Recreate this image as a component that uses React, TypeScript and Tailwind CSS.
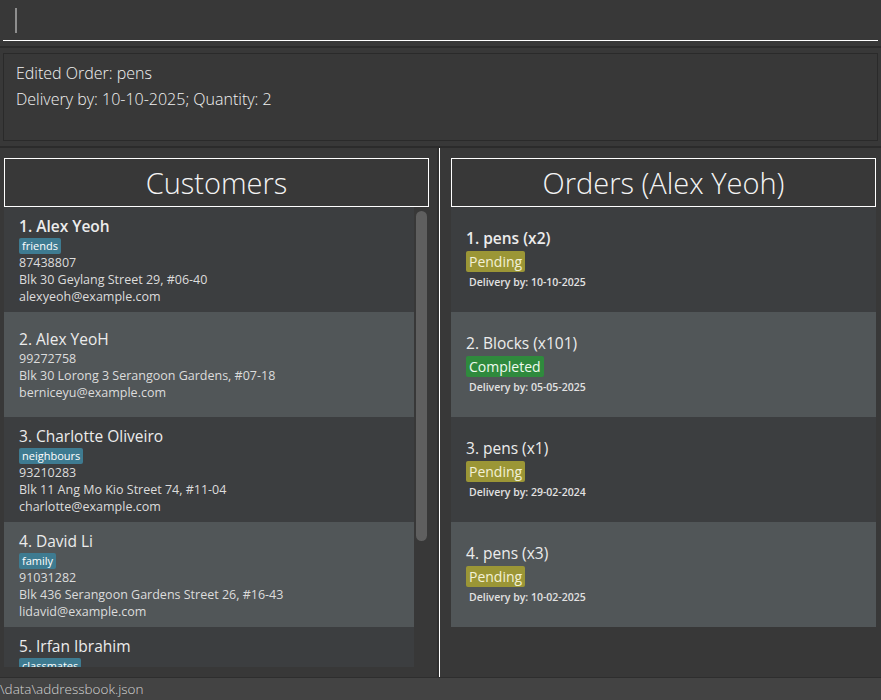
import React from 'react'

type Customer = {
  name: string
  tag?: string
  phone: string
  address: string
  email: string
}

const customers: Customer[] = [
  { name: 'Alex Yeoh', tag: 'friends', phone: '87438807', address: 'Blk 30 Geylang Street 29, #06-40', email: 'alexyeoh@example.com' },
  { name: 'Alex YeoH', phone: '99272758', address: 'Blk 30 Lorong 3 Serangoon Gardens, #07-18', email: 'berniceyu@example.com' },
  { name: 'Charlotte Oliveiro', tag: 'neighbours', phone: '93210283', address: 'Blk 11 Ang Mo Kio Street 74, #11-04', email: 'charlotte@example.com' },
  { name: 'David Li', tag: 'family', phone: '91031282', address: 'Blk 436 Serangoon Gardens Street 26, #16-43', email: 'lidavid@example.com' },
  { name: 'Irfan Ibrahim', tag: 'classmates', phone: '92492021', address: 'Blk 47 Tampines Street 20, #17-35', email: 'irfan@example.com' },
]

const orders = [
  { name: 'pens', qty: 2, status: 'Pending', date: '10-10-2025' },
  { name: 'Blocks', qty: 101, status: 'Completed', date: '05-05-2025' },
  { name: 'pens', qty: 1, status: 'Pending', date: '29-02-2024' },
  { name: 'pens', qty: 3, status: 'Pending', date: '10-02-2025' },
]

function CustomerCard({ c, i }: { c: Customer; i: number }) {
  return (
    <div
      className={`h-[105px] shrink-0 flex flex-col justify-center pl-[15px] ${
        i % 2 === 0 ? 'bg-[#3c3e40]' : 'bg-[#515658]'
      }`}
    >
      <div className={`text-[15.5px] leading-[22px] text-[#ececec] ${i === 0 ? 'font-semibold' : 'font-medium'}`}>
        {i + 1}. {c.name}
      </div>
      {c.tag && (
        <div className="flex mt-[1px]">
          <span className="bg-[#3e7b91] text-white text-[11px] leading-[16px] px-[3px] rounded-[2px]">{c.tag}</span>
        </div>
      )}
      <div className="text-[12.5px] leading-[17px] text-[#dcdcdc]">
        <div>{c.phone}</div>
        <div>{c.address}</div>
        <div>{c.email}</div>
      </div>
    </div>
  )
}

export default function App() {
  return (
    <div className="h-[700px] w-[881px] bg-[#383838] flex flex-col overflow-hidden font-['Open_Sans',sans-serif]">
      {/* command box */}
      <div className="h-[46px] px-[3px]">
        <div className="h-[41px] border-b border-white pl-[12px] pt-[8px]">
          <div className="w-[2px] h-[25px] bg-[#8e8e8e]" />
        </div>
      </div>
      <div className="h-[2px] bg-[#2b2b2b]" />

      {/* result display */}
      <div className="px-[3px] pt-[5px] pb-[5px]">
        <div className="h-[88px] border border-[#2a2a2a] px-[12px] pt-[6px] text-[16px] leading-[26px] font-light text-[#f2f2f2]">
          <div>Edited Order: pens</div>
          <div>Delivery by: 10-10-2025; Quantity: 2</div>
        </div>
      </div>
      <div className="h-[2px] bg-[#2b2b2b]" />

      {/* panels */}
      <div className="flex-1 flex min-h-0">
        <div className="w-[437px] pt-[10px] pl-[4px] flex flex-col min-h-0">
          <div className="w-[425px] h-[49px] shrink-0 border border-white flex items-center justify-center text-[29px] font-light text-[#f4f4f4]">
            Customers
          </div>
          <div className="h-[460px] flex">
            <div className="w-[410px] flex flex-col overflow-hidden">
              {customers.map((c, i) => (
                <CustomerCard key={i} c={c} i={i} />
              ))}
            </div>
            <div className="w-[15px] pl-[2px] pr-[2px] pt-[4px]">
              <div className="w-[11px] h-[330px] rounded-full bg-[#5f5f5f]" />
            </div>
          </div>
        </div>
        <div className="w-[2px] bg-[#2f2f2f]" />
        <div className="w-[1px] bg-white" />
        <div className="flex-1 pt-[10px] pl-[11px]">
          <div className="w-[425px] h-[49px] border border-white flex items-center justify-center text-[29px] font-light text-[#f4f4f4]">
            Orders (Alex Yeoh)
          </div>
          <div className="w-[425px] flex flex-col">
            {orders.map((o, i) => (
              <div
                key={i}
                className={`h-[105px] flex flex-col justify-center pl-[15px] ${
                  i % 2 === 0 ? 'bg-[#3c3e40]' : 'bg-[#515658]'
                }`}
              >
                <div className={`text-[15.5px] leading-[21px] text-[#ececec] ${i === 0 ? 'font-semibold' : 'font-medium'}`}>
                  {i + 1}. {o.name} (x{o.qty})
                </div>
                <div className="flex mt-[2px]">
                  <span
                    className={`text-[14px] leading-[21px] px-[3px] rounded-[2px] font-medium ${
                      o.status === 'Completed' ? 'bg-[#2f8a3d] text-[#eefaee]' : 'bg-[#9b9636] text-[#f3f1d6]'
                    }`}
                  >
                    {o.status}
                  </span>
                </div>
                <div className="text-[10.5px] leading-[20px] font-semibold text-[#e2e2e2] pl-[3px]">
                  Delivery by: {o.date}
                </div>
              </div>
            ))}
          </div>
        </div>
      </div>

      {/* status bar */}
      <div className="h-[23px] shrink-0 border-t border-[#2e2e2e] bg-[#434343] flex items-center">
        <span className="text-[13.5px] leading-[18px] text-[#d4d4d4] font-light">\data\addressbook.json</span>
      </div>
    </div>
  )
}
